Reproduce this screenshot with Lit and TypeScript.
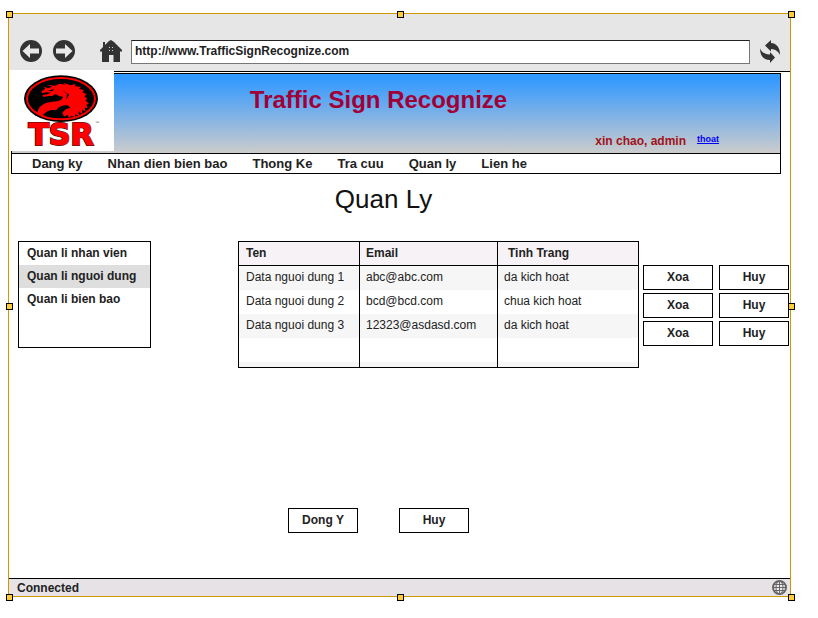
import { LitElement, html, svg, css } from "lit";
import { customElement, property, state } from "lit/decorators.js";
import { classMap } from "lit/directives/class-map.js";

@customElement("tsr-logo")
class TsrLogo extends LitElement {
  static styles = css`
    :host { display: block; background: #fff; }
    svg { display: block; }
    .word { font: 900 30px "DejaVu Sans", sans-serif; fill: #f00; stroke: #f00; stroke-width: 1; }
    .shade { fill: #111; stroke: #111; stroke-width: 2; }
    .tm { font: 4px "Liberation Sans", sans-serif; fill: #444; }
  `;
  render() {
    return html`<svg width="105" height="81" viewBox="0 0 105 81" role="img" aria-label="TSR">
      ${svg`
      <text class="word shade" x="52" y="75" text-anchor="middle" aria-hidden="true">TSR</text>
      <text class="word" x="52" y="75" text-anchor="middle">TSR</text>
      <text class="tm" x="86" y="54">™</text>
      <g transform="translate(6 0) scale(.3333)">
        <ellipse cx="138" cy="86" rx="111" ry="70" fill="#000"/>
        <ellipse cx="138" cy="86" rx="102" ry="62" fill="#000" stroke="#f00" stroke-width="6"/>
        <path fill="#f00" d="M67 131 C68 108 88 97 112 95 C130 94 142 90 144 80 L132 78 L121 72 L112 78 L100 78 L86 81 L82 75 L96 73 L108 68 L94 67 L82 70 L79 64 L91 57 L86 50 L99 55 L112 50 L95 44 L120 47 L133 41 L152 44 L144 38 L168 46 L181 41 L179 49 L198 50 L192 56 L207 61 L202 67 L215 73 L208 79 L217 86 L211 91 L222 101 L214 104 L218 114 L209 113 L211 124 L201 119 L202 132 L190 124 L193 138 L181 132 L180 142 L170 137 L162 143 L158 134 L147 140 L142 128 L152 118 L166 113 L158 106 C140 106 128 112 124 121 C112 118 92 122 84 136 Z"/>
        <path fill="#000" d="M99 62 L117 57 L113 64 Z M140 60 L156 72 L154 88 L163 74 Z"/>
      </g>`}
    </svg>`;
  }
}

@customElement("browser-toolbar")
class BrowserToolbar extends LitElement {
  @property() address = "";
  static styles = css`
    :host { display: flex; align-items: flex-start; background: #e6e6e6; padding: 26px 10px 7px 11px; border-bottom: 1px solid #000; }
    button { display: block; border: 0; padding: 0; background: none; flex: none; }
    svg { display: block; }
    .forward { margin: 0 25px 0 11px; }
    .address { flex: 1; min-width: 0; box-sizing: border-box; height: 24px; margin: 0 10px 0 9px; padding: 0 3px 3px; border: 1px solid #777; border-top-color: #222; border-radius: 0; background: #fff; color: #222; font: bold 12px "Liberation Sans", Arial, sans-serif; }
  `;
  private arrow(flip: boolean) {
    return html`<svg width="22" height="22" viewBox="0 0 22 22">
      <circle cx="11" cy="11" r="11" fill="#333"/>
      <path transform=${flip ? "translate(22 0) scale(-1 1)" : ""} fill="#e9e9e9" d="M2.500 11 L10 4 V8.500 H19 V13.500 H10 V18Z"/>
    </svg>`;
  }
  render() {
    return html`
      <button aria-label="Back">${this.arrow(false)}</button>
      <button class="forward" aria-label="Forward">${this.arrow(true)}</button>
      <button aria-label="Home"><svg width="22" height="22" viewBox="0 0 22 22">
        <path fill="#333" d="M11 0 L14 2 L22 10 V11.500 H20 V22 H13.500 V15 H9 V22 H2 V11.500 H0 V10 L3 7 V2 H5 V5 L9 1Z"/>
        <path fill="#ddd" d="M9 7h1v1H9zM12 7h1v1H12zM9 10h1v1H9zM12 10h1v1H12z"/>
      </svg></button>
      <input class="address" type="text" aria-label="Address" .value=${this.address}>
      <button aria-label="Refresh"><svg width="20" height="24" viewBox="0 0 20 24">
        <path fill="#333" d="M5 5.500 L11 0 V3 C17 3.500 20 8 20 15 C18 11 15.500 9.500 11 9 V11.500Z"/>
        <path fill="#333" d="M15 17.500 L10 23 V20 C3 20 0 15 0 8.500 C2 12.500 4.500 14 10 14.500 V12Z"/>
      </svg></button>`;
  }
}

interface User { name: string; email: string; status: string; }

@customElement("app-root")
class AppRoot extends LitElement {
  @state() private section = 1;
  private nav = ["Dang ky", "Nhan dien bien bao", "Thong Ke", "Tra cuu", "Quan ly", "Lien he"];
  private sections = ["Quan li nhan vien", "Quan li nguoi dung", "Quan li bien bao"];
  private users: User[] = [
    { name: "Data nguoi dung 1", email: "abc@abc.com", status: "da kich hoat" },
    { name: "Data nguoi dung 2", email: "bcd@bcd.com", status: "chua kich hoat" },
    { name: "Data nguoi dung 3", email: "12323@asdasd.com", status: "da kich hoat" },
  ];

  static styles = css`
    :host { display: flex; box-sizing: border-box; min-height: 100vh; padding: 13px 27px 21px 8px; background: #fff; color: #222; font: bold 12px/16px "Liberation Sans", Arial, sans-serif; }
    .frame { position: relative; flex: 1; min-width: 0; display: flex; flex-direction: column; border: 1px solid #c90; }
    .handle { position: absolute; box-sizing: border-box; width: 7px; height: 7px; border: 1px solid #000; background: #fc3; }
    .n { top: -3px; } .s { bottom: -5px; } .w { left: -3px; } .e { right: -5px; }
    .mid-x { left: calc(50% - 3px); } .mid-y { top: calc(50% - 2px); }

    .banner { position: relative; margin: 1px 9px 0 2px; padding: 10px 61px 4px 0; border: 1px solid #000; background: linear-gradient(#39f 6%, #ccc); }
    .logo { position: absolute; left: -3px; top: -4px; }
    .title { margin: 0; padding-left: 26px; text-align: center; font-size: 24px; line-height: 32px; color: #a00036; }
    .session { display: flex; justify-content: flex-end; gap: 11px; margin-top: 17px; color: #a11219; }
    .logout { font-size: 9px; line-height: 13px; color: #00f; }
    .nav { display: flex; gap: 25px; margin: 0 9px 0 2px; padding: 2px 20px 1px; border: 1px solid #000; border-top: 0; font-size: 13px; line-height: 16px; }
    .nav a, .sections a { color: inherit; text-decoration: none; }

    .heading { margin: 8px 32px 0 0; text-align: center; font-weight: normal; font-size: 26px; line-height: 34px; color: #111; }
    .content { display: flex; justify-content: space-between; align-items: flex-start; margin-top: 25px; padding: 0 1px 0 9px; }
    .sections { box-sizing: border-box; width: 133px; min-height: 107px; margin: 0; padding: 0; list-style: none; border: 1px solid #000; }
    .sections a { display: block; padding: 3px 8px 4px; }
    .sections .current { background: #dedede; }
    .records { display: flex; gap: 4px; }
    table { width: 401px; table-layout: fixed; border-collapse: separate; border-spacing: 0; border: 1px solid #000; }
    .c1 { width: 121px; } .c2 { width: 138px; }
    th, td { box-sizing: border-box; height: 24px; padding: 0 0 1px 7px; text-align: left; border-right: 1px solid #000; }
    th { background: #f6f2f6; border-bottom: 1px solid #000; }
    th:last-child { padding-left: 10px; }
    th:last-child, td:last-child { border-right: 0; }
    td { font-weight: normal; padding-bottom: 2px; }
    td + td, th.email { padding-left: 6px; }
    tbody tr:nth-child(odd) { background: #f6f6f6; }
    .rest td { height: 5px; }
    .actions { display: grid; grid-template-columns: 70px 70px; gap: 3px 6px; align-content: start; padding-top: 24px; }
    .btn { box-sizing: border-box; width: 70px; height: 25px; padding: 0 0 1px; border: 1px solid #000; border-radius: 0; background: #fff; color: inherit; font: inherit; }
    .confirm { display: flex; justify-content: center; gap: 41px; margin: auto 42px 45px 0; }
    .status { display: flex; justify-content: space-between; align-items: center; padding: 0 3px 0 8px; border-top: 1px solid #000; background: #e6e2e6; height: 17px; }
    .status svg { display: block; }
  `;

  render() {
    return html`<div class="frame">
      <browser-toolbar address="http://www.TrafficSignRecognize.com"></browser-toolbar>
      <header class="banner">
        <tsr-logo class="logo"></tsr-logo>
        <h1 class="title">Traffic Sign Recognize</h1>
        <div class="session"><span>xin chao, admin</span><a class="logout" href="#">thoat</a></div>
      </header>
      <nav class="nav">${this.nav.map((n) => html`<a href="#">${n}</a>`)}</nav>
      <h2 class="heading">Quan Ly</h2>
      <main class="content">
        <ul class="sections">${this.sections.map((s, i) => html`<li><a href="#" class=${classMap({ current: i === this.section })} @click=${() => (this.section = i)}>${s}</a></li>`)}</ul>
        <div class="records">
          <table>
            <colgroup><col class="c1"><col class="c2"><col></colgroup>
            <thead><tr><th scope="col">Ten</th><th scope="col" class="email">Email</th><th scope="col">Tinh Trang</th></tr></thead>
            <tbody>
              ${this.users.map((u) => html`<tr><td>${u.name}</td><td>${u.email}</td><td>${u.status}</td></tr>`)}
              <tr><td></td><td></td><td></td></tr>
              <tr class="rest"><td></td><td></td><td></td></tr>
            </tbody>
          </table>
          <div class="actions">${this.users.map(() => html`<button class="btn">Xoa</button><button class="btn">Huy</button>`)}</div>
        </div>
      </main>
      <div class="confirm"><button class="btn">Dong Y</button><button class="btn">Huy</button></div>
      <footer class="status"><span>Connected</span>
        <svg width="15" height="15" viewBox="0 0 15 15" fill="none" stroke="#666"><circle cx="7.500" cy="7.500" r="6.500" stroke-width="2" fill="#eee"/><path d="M1 4.500H14M1 7.500H14M1 10.500H14M7.500 1V14"/><ellipse cx="7.500" cy="7.500" rx="3.500" ry="6.500"/></svg>
      </footer>
      ${["n w", "n mid-x", "n e", "w mid-y", "e mid-y", "s w", "s mid-x", "s e"].map((p) => html`<span class="handle ${p}"></span>`)}
    </div>`;
  }
}
